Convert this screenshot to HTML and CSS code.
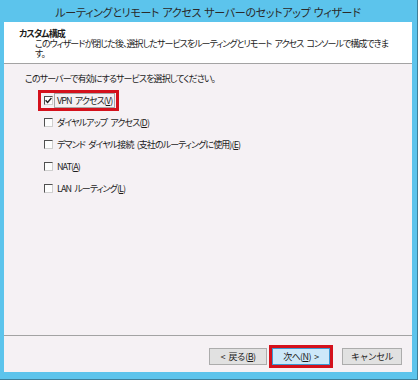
FILE: index.html
```html
<!DOCTYPE html>
<html lang="ja">
<head>
  <meta charset="UTF-8">
  <title>ルーティングとリモート アクセス サーバーのセットアップ ウィザード</title>
  <link rel="stylesheet" href="styles.css">
</head>
<body>
  <div class="frame">
    <div class="titlebar">ルーティングとリモート アクセス サーバーのセットアップ ウィザード</div>
    <div class="window">
      <div class="header">
        <div class="header-title">カスタム構成</div>
        <div class="header-desc">このウィザードが閉じた後、選択したサービスをルーティングとリモート アクセス コンソールで構成できま<br>す。</div>
      </div>

      <div class="content">
        <p class="intro">このサーバーで有効にするサービスを選択してください。</p>
        <div class="options">
          <div class="item">
            <span class="mark marked">
              <span class="box">
                <svg width="7" height="7" viewBox="0 0 7 7"><path d="M0.6 3.2 L2.6 5.4 L6.4 1" fill="none" stroke="#222" stroke-width="1.4"/></svg>
              </span>
              <span class="label focused">VPN アクセス(<u>V</u>)</span>
            </span>
          </div>
          <div class="item">
            <span class="mark"><span class="box"></span><span class="label">ダイヤルアップ アクセス(<u>D</u>)</span></span>
          </div>
          <div class="item">
            <span class="mark"><span class="box"></span><span class="label">デマンド ダイヤル接続 (支社のルーティングに使用)(<u>E</u>)</span></span>
          </div>
          <div class="item">
            <span class="mark"><span class="box"></span><span class="label">NAT(<u>A</u>)</span></span>
          </div>
          <div class="item">
            <span class="mark"><span class="box"></span><span class="label">LAN ルーティング(<u>L</u>)</span></span>
          </div>
        </div>
      </div>

      <div class="footer">
        <button class="btn">&lt; 戻る(<u>B</u>)</button>
        <button class="btn btn-next">次へ(<u>N</u>) &gt;</button>
        <button class="btn btn-cancel">キャンセル</button>
      </div>
    </div>
  </div>
</body>
</html>
```

FILE: styles.css
```css
body {
  margin: 0;
  padding: 0;
  font-family: "Noto Sans CJK JP", "Noto Sans", sans-serif;
  font-size: 9px;
  font-feature-settings: "palt";
  letter-spacing: -0.9px;
  word-spacing: 2px;
  color: #1c1c1c;
}

.frame {
  width: 418px;
  height: 380px;
  box-sizing: border-box;
  background-color: #5cc4ec;
  padding: 0 5px 7px 4px;
  border-right: 1px solid #3d7f99;
  border-bottom: 1px solid #3d7f99;
  display: flex;
  flex-direction: column;
}

.titlebar {
  height: 22px;
  line-height: 25px;
  text-align: center;
  font-size: 11px;
  letter-spacing: -0.3px;
  word-spacing: 1px;
  color: #2a2a2a;
}

.window {
  flex: 1;
  display: flex;
  flex-direction: column;
  background-color: #f5f1f4;
}

.header {
  height: 42px;
  box-sizing: border-box;
  background-color: #fff;
  border-bottom: 1px solid #a3a3a3;
  padding: 6px 10px 0 15px;
}
.header-title {
  font-weight: bold;
  line-height: 11px;
}
.header-desc {
  padding-left: 16px;
  line-height: 10px;
  white-space: nowrap;
  letter-spacing: -0.95px;
}

.content {
  flex: 1;
  padding: 9px 10px 0 21px;
}
.intro {
  margin: 0;
  line-height: 12px;
}
.options {
  margin-top: 4px;
  margin-left: 13px;
}
.item {
  height: 22px;
  display: flex;
  align-items: center;
}
.mark {
  display: flex;
  align-items: center;
  border: 3px solid transparent;
  padding: 0 1px 0 3px;
  height: 15px;
}
.mark.marked {
  border-color: #d4111c;
}
.box {
  width: 7px;
  height: 7px;
  border: 1px solid #cfcfcf;
  border-top-color: #505050;
  border-left-color: #505050;
  background-color: #fdfdfd;
  margin-right: 1px;
  display: flex;
  align-items: center;
  justify-content: center;
}
.label {
  padding: 1px 2px;
  line-height: 11px;
  border: 1px solid transparent;
}
.label.focused {
  border-color: #a8a8a8;
}

.footer {
  border-top: 1px solid #a3a3a3;
  padding: 12px 10px 7px 0;
  display: flex;
  justify-content: flex-end;
}
.btn {
  font-family: inherit;
  font-size: 9px;
  letter-spacing: -0.6px;
  word-spacing: 2px;
  color: #1c1c1c;
  width: 58px;
  height: 17px;
  padding: 0;
  background-color: #e1e1e1;
  border: 1px solid #acacac;
  line-height: 14px;
}
.btn-next {
  margin-left: 5px;
  background-color: #cde8f9;
  border-color: #3c98d2;
  outline: 3px solid #d4111c;
  outline-offset: 0;
}
.btn-cancel {
  margin-left: 12px;
  width: 60px;
}
```
